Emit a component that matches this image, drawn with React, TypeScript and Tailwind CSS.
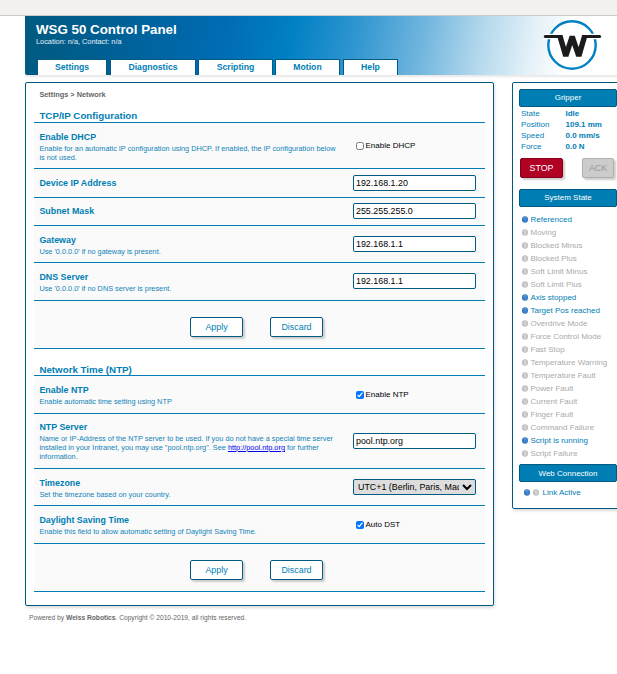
import React from "react";

type RowProps = {
  height: string;
  textTop: string;
  controlTop: string;
  title: string;
  desc?: React.ReactNode;
  children: React.ReactNode;
};

function Row({ height, textTop, controlTop, title, desc, children }: RowProps) {
  return (
    <div className={`flex border-b border-[#007eb4] bg-[#fafafa] ${height}`}>
      <div className={`w-[319px] shrink-0 pl-[5.4px] whitespace-nowrap ${textTop}`}>
        <div className="text-[8.9px] leading-[12px] font-bold">{title}</div>
        {desc && <div className="mt-px text-[7.33px] leading-[9px] text-[#1083b8]">{desc}</div>}
      </div>
      <div className={controlTop}>{children}</div>
    </div>
  );
}

function SectionTitle({ children, height }: { children: React.ReactNode; height: string }) {
  return (
    <h2 className={`flex items-end border-b border-[#007eb4] pl-[5.4px] text-[9.75px] font-bold ${height}`}>
      {children}
    </h2>
  );
}

function Field({ value }: { value: string }) {
  return (
    <input
      type="text"
      defaultValue={value}
      className="block h-4 w-[123px] rounded-[2px] border border-[#005a82] bg-white px-[2px] py-0 text-[8.9px] leading-[14px] text-black"
    />
  );
}

function Check({ label, checked }: { label: string; checked?: boolean }) {
  return (
    <label className="flex h-2 items-center pl-[3px] text-[8px] leading-[8px] text-black">
      <input type="checkbox" defaultChecked={checked} className="m-0 h-2 w-2" />
      <span className="relative -top-[0.5px] ml-[1.5px] whitespace-nowrap">{label}</span>
    </label>
  );
}

const buttonBase =
  "flex h-5 items-center justify-center rounded-[2px] border pt-px text-[8.9px] shadow-[2px_2px_2px_#cccccc]";

function FormButtons() {
  return (
    <div className="flex h-[48px] gap-[27px] border-b border-[#007eb4] bg-[#fafafa] pt-4 pl-[156px]">
      <button className={`${buttonBase} w-[53px] border-[#005a82] bg-white`}>Apply</button>
      <button className={`${buttonBase} w-[53px] border-[#005a82] bg-white`}>Discard</button>
    </div>
  );
}

function Led({ on }: { on?: boolean }) {
  return (
    <svg width="6" height="7" viewBox="0 0 6 7" className="shrink-0">
      <ellipse cx="3" cy="3.5" rx="3" ry="3.3" fill={on ? "#2f74bd" : "#bcbcbc"} />
      <ellipse cx="3.4" cy="4" rx="1.6" ry="2" fill={on ? "#3f8bd2" : "#d2d2d2"} />
      <path d="M1.3 2.5Q3 .8 4.5 2" stroke={on ? "#7fb2df" : "#dedede"} strokeWidth=".8" fill="none" />
    </svg>
  );
}

function SideTitle({ children }: { children: React.ReactNode }) {
  return (
    <div className="flex h-[18px] w-[98px] items-center justify-center rounded-[2px] border border-[#005a82] bg-[#007eb4] text-[8px] text-white">
      {children}
    </div>
  );
}

const states: [string, boolean][] = [
  ["Referenced", true],
  ["Moving", false],
  ["Blocked Minus", false],
  ["Blocked Plus", false],
  ["Soft Limit Minus", false],
  ["Soft Limit Plus", false],
  ["Axis stopped", true],
  ["Target Pos reached", true],
  ["Overdrive Mode", false],
  ["Force Control Mode", false],
  ["Fast Stop", false],
  ["Temperature Warning", false],
  ["Temperature Fault", false],
  ["Power Fault", false],
  ["Current Fault", false],
  ["Finger Fault", false],
  ["Command Failure", false],
  ["Script is running", true],
  ["Script Failure", false],
];

const readings = [
  ["State", "Idle"],
  ["Position", "109.1 mm"],
  ["Speed", "0.0 mm/s"],
  ["Force", "0.0 N"],
];

const tab =
  "flex h-4 items-center justify-center border border-b-0 border-[#005a82] bg-white rounded-t-[1px] text-[8.67px] font-bold";

function Header() {
  return (
    <header className="ml-[25px] flex h-[59px] justify-between rounded-bl-[2px] bg-[linear-gradient(100deg,#005a80_0px,#005f92_80px,#006cb4_200px,#0080c4_265px,#3096d0_330px,#70b5de_395px,#b5d9ed_455px,#e4f1f8_505px,#ffffff_540px)] shadow-[0_2px_2px_#e8e8e8]">
      <div>
        <div className="h-[43px] pt-[6px] pl-[11px] text-white">
          <h1 className="text-[13.33px] leading-[15px] font-bold whitespace-nowrap">WSG 50 Control Panel</h1>
          <div className="text-[7.33px] leading-[9px] text-[#e4f0f6]">Location: n/a, Contact: n/a</div>
        </div>
        <nav className="flex pl-3">
          <a className={`${tab} w-[70px]`}>Settings</a>
          <a className={`${tab} ml-[3px] w-[86px]`}>Diagnostics</a>
          <a className={`${tab} ml-[2px] w-[75px]`}>Scripting</a>
          <a className={`${tab} ml-[2px] w-[65px]`}>Motion</a>
          <a className={`${tab} ml-[3px] w-[55px]`}>Help</a>
        </nav>
      </div>
      <svg width="60" height="54" viewBox="542 18 60 54" className="mt-[2px] mr-[15px] shrink-0">
        <circle cx="572" cy="45" r="23.7" fill="white" stroke="#0080c3" strokeWidth="2.4" />
        <path d="M544 36.5H601" stroke="white" strokeWidth="5.4" />
        <path d="M545.3 36.5H561" stroke="#1b1a1d" strokeWidth="3" strokeLinecap="round" />
        <path d="M583.5 36.5H599.6" stroke="#1b1a1d" strokeWidth="3" strokeLinecap="round" />
        <path
          d="M559.8 35.4L565.8 56L572.2 36.6L578.8 56L584.8 35.4"
          fill="none"
          stroke="#1b1a1d"
          strokeWidth="5.4"
          strokeLinejoin="bevel"
        />
      </svg>
    </header>
  );
}

function SidePanel() {
  return (
    <aside className="h-[427px] w-[120px] shrink-0 rounded-[2px] border border-[#005a82] bg-white pt-[6px] pl-[6px] shadow-[1px_2px_3px_#dddddd]">
      <SideTitle>Gripper</SideTitle>
      <div className="mt-[2.4px] h-[43.6px] pl-[2px] text-[8px] leading-[10.8px]">
        {readings.map(([name, value]) => (
          <div key={name} className="flex whitespace-nowrap">
            <span className="w-[44.5px]">{name}</span>
            <b>{value}</b>
          </div>
        ))}
      </div>
      <div className="mt-[5px] flex pl-px">
        <button className={`${buttonBase} w-[43px] border-[#850018] bg-[#b00024] text-white`}>STOP</button>
        <button className={`${buttonBase} ml-[19px] w-8 border-[#b0b0b0] bg-[#cccccc] text-[#999999]`}>ACK</button>
      </div>
      <div className="mt-[11px]">
        <SideTitle>System State</SideTitle>
      </div>
      <ul className="mt-[6px] pl-[3px] text-[8px] leading-[13px]">
        {states.map(([name, on]) => (
          <li key={name} className={`flex h-[13px] items-center gap-[2.5px] whitespace-nowrap ${on ? "" : "text-[#aaaaaa]"}`}>
            <Led on={on} />
            {name}
          </li>
        ))}
      </ul>
      <div className="mt-[4px]">
        <SideTitle>
          <span className="pt-[2px]">Web Connection</span>
        </SideTitle>
      </div>
      <div className="mt-1 flex h-[13px] items-center pl-[5px] text-[8px] leading-[13px]">
        <Led on />
        <span className="ml-[3px] flex items-center gap-[3.5px] whitespace-nowrap">
          <Led />
          Link Active
        </span>
      </div>
    </aside>
  );
}

export default function App() {
  return (
    <div className="h-[674px] w-[617px] overflow-hidden bg-white font-['Liberation_Sans',Arial,sans-serif] text-[#007eb4]">
      <div className="h-4 border-b border-[#cbcac5] bg-[#f2f1f0]" />
      <Header />
      <div className="mt-[7px] ml-[25px] flex gap-[18px]">
        <main className="h-[524px] w-[469px] shrink-0 rounded-[2px] border border-[#005a82] bg-white px-2 shadow-[1px_2px_3px_#dddddd]">
          <div className="h-[20px] pt-[7px] pl-[5.4px] text-[7.33px] leading-[9px] font-bold text-[#666666]">
            Settings &gt; Network
          </div>
          <SectionTitle height="h-[20px] leading-[12px]">TCP/IP Configuration</SectionTitle>
          <Row
            height="h-[46px]"
            textTop="pt-2"
            controlTop="pt-[19px]"
            title="Enable DHCP"
            desc={
              <>
                Enable for an automatic IP configuration using DHCP. If enabled, the IP configuration below
                <br />
                is not used.
              </>
            }
          >
            <Check label="Enable DHCP" />
          </Row>
          <Row height="h-[29px]" textTop="pt-2" controlTop="pt-[6px]" title="Device IP Address">
            <Field value="192.168.1.20" />
          </Row>
          <Row height="h-[28px]" textTop="pt-[7px]" controlTop="pt-[5px]" title="Subnet Mask">
            <Field value="255.255.255.0" />
          </Row>
          <Row height="h-[37px]" textTop="pt-2" controlTop="pt-[10px]" title="Gateway" desc="Use '0.0.0.0' if no gateway is present.">
            <Field value="192.168.1.1" />
          </Row>
          <Row height="h-[38px]" textTop="pt-2" controlTop="pt-[10px]" title="DNS Server" desc="Use '0.0.0.0' if no DNS server is present.">
            <Field value="192.168.1.1" />
          </Row>
          <FormButtons />
          <SectionTitle height="h-[27px] leading-[10px]">Network Time (NTP)</SectionTitle>
          <Row height="h-[38px]" textTop="pt-2" controlTop="pt-[15px]" title="Enable NTP" desc="Enable automatic time setting using NTP">
            <Check label="Enable NTP" checked />
          </Row>
          <Row
            height="h-[55px]"
            textTop="pt-[7px]"
            controlTop="pt-[19px]"
            title="NTP Server"
            desc={
              <>
                Name or IP-Address of the NTP server to be used. If you do not have a special time server
                <br />
                installed in your Intranet, you may use "pool.ntp.org". See{" "}
                <a className="text-[#0000ee] underline">http://pool.ntp.org</a> for further
                <br />
                information.
              </>
            }
          >
            <Field value="pool.ntp.org" />
          </Row>
          <Row height="h-[37px]" textTop="pt-2" controlTop="pt-[10px]" title="Timezone" desc="Set the timezone based on your country.">
            <select className="block h-4 w-[123px] rounded-[2px] border border-[#005a82] bg-[#dddddd] p-0 text-[8.9px] text-black">
              <option>UTC+1 (Berlin, Paris, Madrid)</option>
            </select>
          </Row>
          <Row
            height="h-[38px]"
            textTop="pt-2"
            controlTop="pt-[15px]"
            title="Daylight Saving Time"
            desc="Enable this field to allow automatic setting of Daylight Saving Time."
          >
            <Check label="Auto DST" checked />
          </Row>
          <FormButtons />
        </main>
        <SidePanel />
      </div>
      <footer className="mt-[7px] ml-[29px] text-[6.67px] leading-[9px] text-[#666666]">
        Powered by <b>Weiss Robotics</b>. Copyright © 2010-2019, all rights reserved.
      </footer>
    </div>
  );
}
